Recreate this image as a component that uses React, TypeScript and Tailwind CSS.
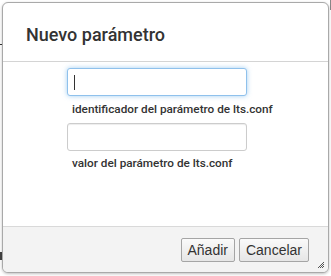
export default function App() {
  return (
    <div className="relative w-[331px] h-[276px] bg-white overflow-hidden">
      {/* bits of the page behind the dialog */}
      <div className="absolute left-0 top-[44px] w-[3px] h-px bg-[#333]" />
      <div className="absolute left-0 top-[252px] w-[3px] h-[8px] bg-[#444]" />
      <div className="absolute right-0 top-0 w-px h-[10px] bg-[#888]" />

      <div
        className="relative ml-[2px] mt-[2px] w-[327px] h-[271px] flex flex-col bg-white border border-[#a9a9a9] rounded-[6px] shadow-[0_1px_3px_rgba(0,0,0,0.25)] overflow-hidden"
        style={{ fontFamily: "Roboto, 'Liberation Sans', sans-serif" }}
      >
        {/* header */}
        <div className="h-[59px] pl-[23px] pt-[20px] border-b border-[#d4d4d4]">
          <h1 className="text-[18px] leading-[24px] font-medium text-[#333]">
            Nuevo parámetro
          </h1>
        </div>

        {/* body */}
        <div className="flex-1 pl-[64px] pt-[6px]">
          <div className="w-[180px] h-[28px] rounded-[3px] border border-[#8fc1ec] shadow-[0_0_5px_rgba(102,175,233,0.6)] bg-white flex items-center pl-[6px]">
            <span className="w-px h-[15px] bg-[#333]" />
          </div>
          <p className="mt-[5px] pl-[5px] text-[11.75px] leading-[16px] font-medium text-[#333]">
            identificador del parámetro de lts.conf
          </p>
          <div className="mt-[6px] w-[180px] h-[28px] rounded-[3px] border border-[#ccc] shadow-[inset_0_1px_1px_rgba(0,0,0,0.075)] bg-white" />
          <p className="mt-[4px] pl-[5px] text-[11.75px] leading-[16px] font-medium text-[#333]">
            valor del parámetro de lts.conf
          </p>
        </div>

        {/* footer */}
        <div
          className="relative h-[46px] bg-[#f3f3f3] border-t border-[#d9d9d9] flex justify-end items-start gap-[4px] pt-[11px] pr-[19px]"
          style={{ fontFamily: "'Liberation Sans', Arial, sans-serif" }}
        >
          <button className="h-[24px] px-[6px] text-[14px] text-[#333] border border-[#a5a5a5] rounded-[2px] bg-gradient-to-b from-[#fafafa] to-[#e6e6e6]">
            Añadir
          </button>
          <button className="h-[24px] px-[6px] text-[14px] text-[#333] border border-[#a5a5a5] rounded-[2px] bg-gradient-to-b from-[#fafafa] to-[#e6e6e6]">
            Cancelar
          </button>
          <svg
            className="absolute right-[3px] bottom-[3px]"
            width="8"
            height="8"
            viewBox="0 0 8 8"
          >
            <path
              d="M7 1 L1 7 M7 3 L3 7 M7 5 L5 7"
              stroke="#555"
              strokeWidth="1"
            />
          </svg>
        </div>
      </div>
    </div>
  )
}
